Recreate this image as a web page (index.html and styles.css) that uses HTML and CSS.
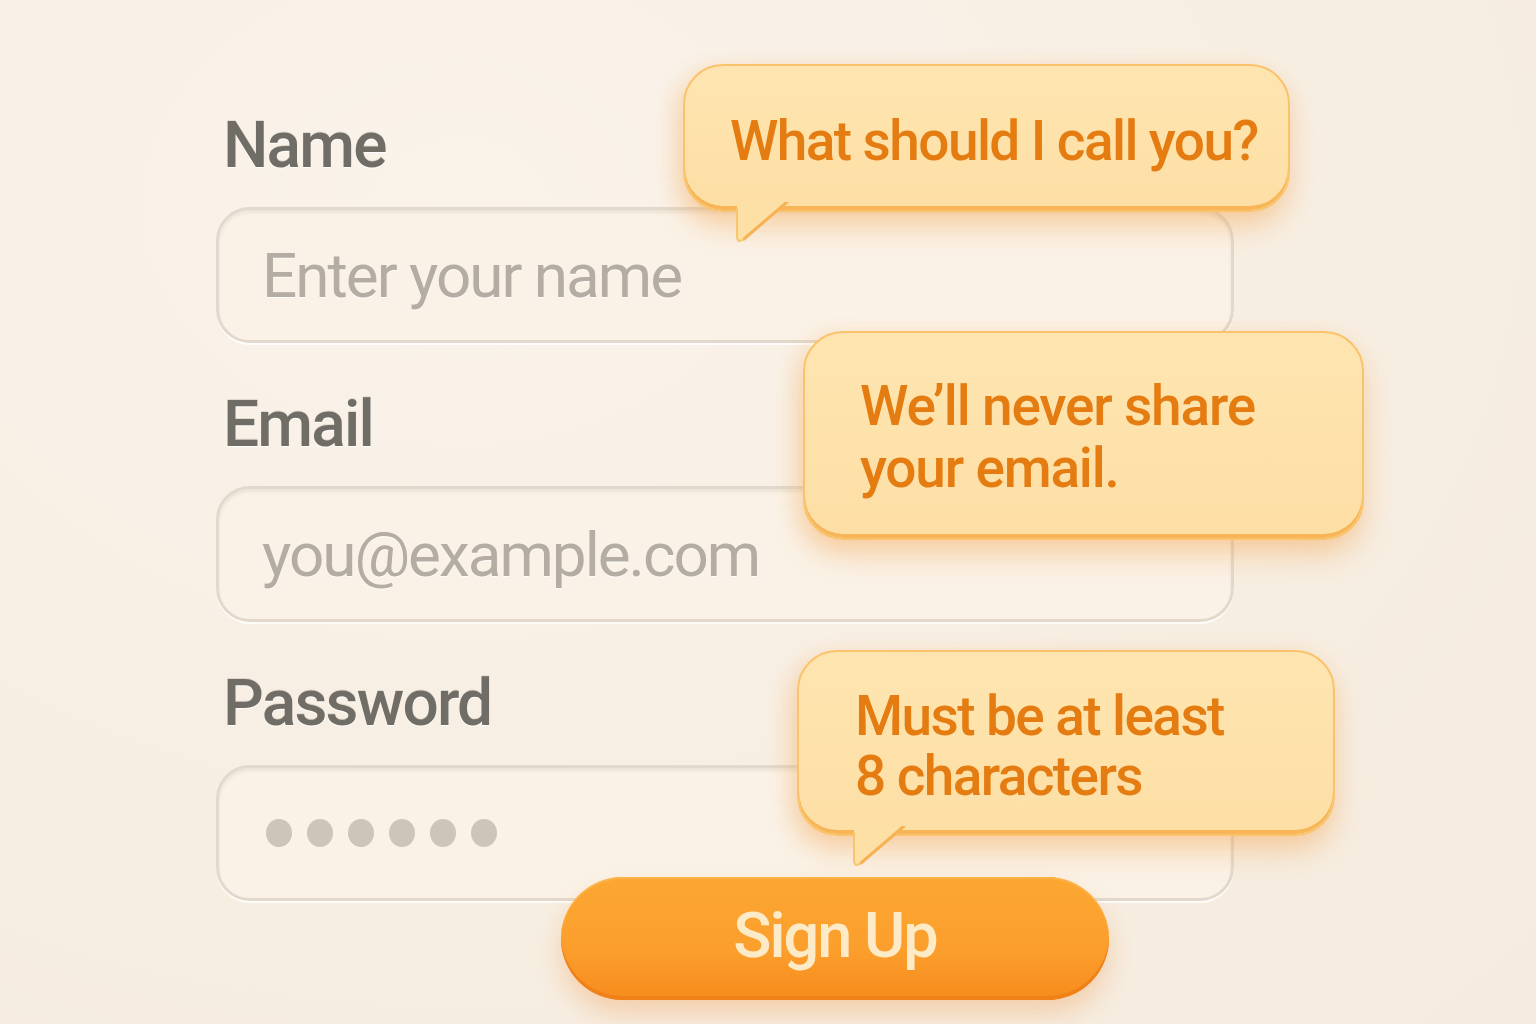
FILE: index.html
```html
<!DOCTYPE html>
<html lang="en">
<head>
<meta charset="utf-8">
<title>Sign Up</title>
<link rel="stylesheet" href="styles.css">
</head>
<body>
<main class="stage">
  <form class="form">
    <div class="field">
      <label class="label">Name</label>
      <div class="input"><span class="placeholder">Enter your name</span></div>
    </div>
    <div class="field">
      <label class="label">Email</label>
      <div class="input"><span class="placeholder">you@example.com</span></div>
    </div>
    <div class="field">
      <label class="label">Password</label>
      <div class="input">
        <span class="dots"><i></i><i></i><i></i><i></i><i></i><i></i></span>
      </div>
    </div>
    <button type="button" class="btn">Sign Up</button>
  </form>

  <div class="tip tip-name">
    <p>What should I call you?</p>
    <svg class="tail" width="60" height="44" viewBox="0 0 60 44"><path d="M4 0 L4 34 Q4 42 11 37 L54 0 Z" fill="#fde0a6"/><path d="M11 37 L54 0" stroke="#f6b253" stroke-width="3" fill="none" stroke-linecap="round"/><path d="M4 6 L4 34 Q4 42 11 37" stroke="#f9c46e" stroke-width="2" fill="none"/></svg>
  </div>
  <div class="tip tip-email">
    <p>We’ll never share<br>your email.</p>
  </div>
  <div class="tip tip-pass">
    <p>Must be at least<br>8 characters</p>
    <svg class="tail" width="60" height="44" viewBox="0 0 60 44"><path d="M4 0 L4 34 Q4 42 11 37 L54 0 Z" fill="#fde0a6"/><path d="M11 37 L54 0" stroke="#f6b253" stroke-width="3" fill="none" stroke-linecap="round"/><path d="M4 6 L4 34 Q4 42 11 37" stroke="#f9c46e" stroke-width="2" fill="none"/></svg>
  </div>
</main>
</body>
</html>
```
FILE: styles.css
```css
* { box-sizing: border-box; }
html, body { margin: 0; padding: 0; }
body {
  background: #f8efe3;
  font-family: "Roboto", "Noto Sans", sans-serif;
  width: 1536px;
  height: 1024px;
  overflow: hidden;
}
.stage {
  position: relative;
  width: 1536px;
  height: 1024px;
  background: radial-gradient(ellipse at 30% 20%, #faf3ea 0%, #f7eee2 60%, #f5ebde 100%);
}
.form {
  display: flex;
  flex-direction: column;
  gap: 50px;
  padding: 114px 0 0 216px;
  width: 1234px;
  margin: 0;
}
.field {
  display: flex;
  flex-direction: column;
  gap: 29px;
}
.label {
  font-size: 64px;
  line-height: 64px;
  font-weight: 500;
  letter-spacing: -1.8px;
  color: #706d66;
  margin-left: 7px;
  white-space: nowrap;
  text-shadow: 0 1px 0 rgba(255,255,255,0.9), 0 -1px 0 rgba(90,80,70,0.15);
}
.input {
  width: 1018px;
  height: 136px;
  border: 3px solid #e2d9cc;
  border-radius: 34px;
  background: #faf2e7;
  box-shadow: inset 0 3px 3px rgba(150,130,110,0.12), 0 2px 0 rgba(255,255,255,0.8);
  display: flex;
  align-items: center;
  padding-left: 43px;
}
.placeholder {
  font-size: 62px;
  font-weight: 400;
  letter-spacing: -2px;
  color: #b4ada3;
  white-space: nowrap;
  text-shadow: 0 1px 0 rgba(255,255,255,0.8);
}
.dots {
  display: flex;
  gap: 15px;
  margin-left: 4px;
}
.dots i {
  display: block;
  width: 26px;
  height: 28px;
  border-radius: 50%;
  background: #cdc5b9;
}
.btn {
  margin: -74px 0 0 345px;
  width: 548px;
  height: 123px;
  border: none;
  border-radius: 62px;
  background: linear-gradient(180deg, #fca733 0%, #fb9e2c 60%, #f68b1c 100%);
  box-shadow: inset 0 -4px 0 #f08119, inset 0 2px 0 #fdb34a, 0 14px 26px rgba(240,140,50,0.3);
  color: #fdebc8;
  font-family: inherit;
  font-size: 63px;
  font-weight: 500;
  letter-spacing: -2px;
  padding: 0 0 6px 0;
  white-space: nowrap;
  cursor: pointer;
}
.tip {
  position: absolute;
  background: linear-gradient(180deg, #fee5b0 0%, #fddfa5 100%);
  border: 2px solid #f9c26b;
  border-radius: 40px;
  box-shadow: inset 0 -4px 0 #f6b557, 0 16px 30px rgba(243,150,50,0.28), -6px 6px 22px rgba(243,150,50,0.18);
  color: #e47c12;
  font-weight: 500;
  white-space: nowrap;
}
.tip p { margin: 0; }
.tip-name {
  left: 683px; top: 64px; width: 607px; height: 148px;
  padding: 45px 0 0 45px;
  font-size: 55px; line-height: 60px;
  letter-spacing: -1.6px;
}
.tip-email {
  left: 803px; top: 331px; width: 561px; height: 209px;
  padding: 42px 0 0 55px;
  font-size: 55px; line-height: 62px;
  letter-spacing: -1.2px;
}
.tip-pass {
  left: 797px; top: 650px; width: 538px; height: 186px;
  padding: 34px 0 0 56px;
  font-size: 55px; line-height: 60px;
  letter-spacing: -1.6px;
}
.tail {
  position: absolute;
  display: block;
}
.tip-name .tail { left: 48px; top: 136px; }
.tip-pass .tail { left: 51px; top: 174px; }
```
